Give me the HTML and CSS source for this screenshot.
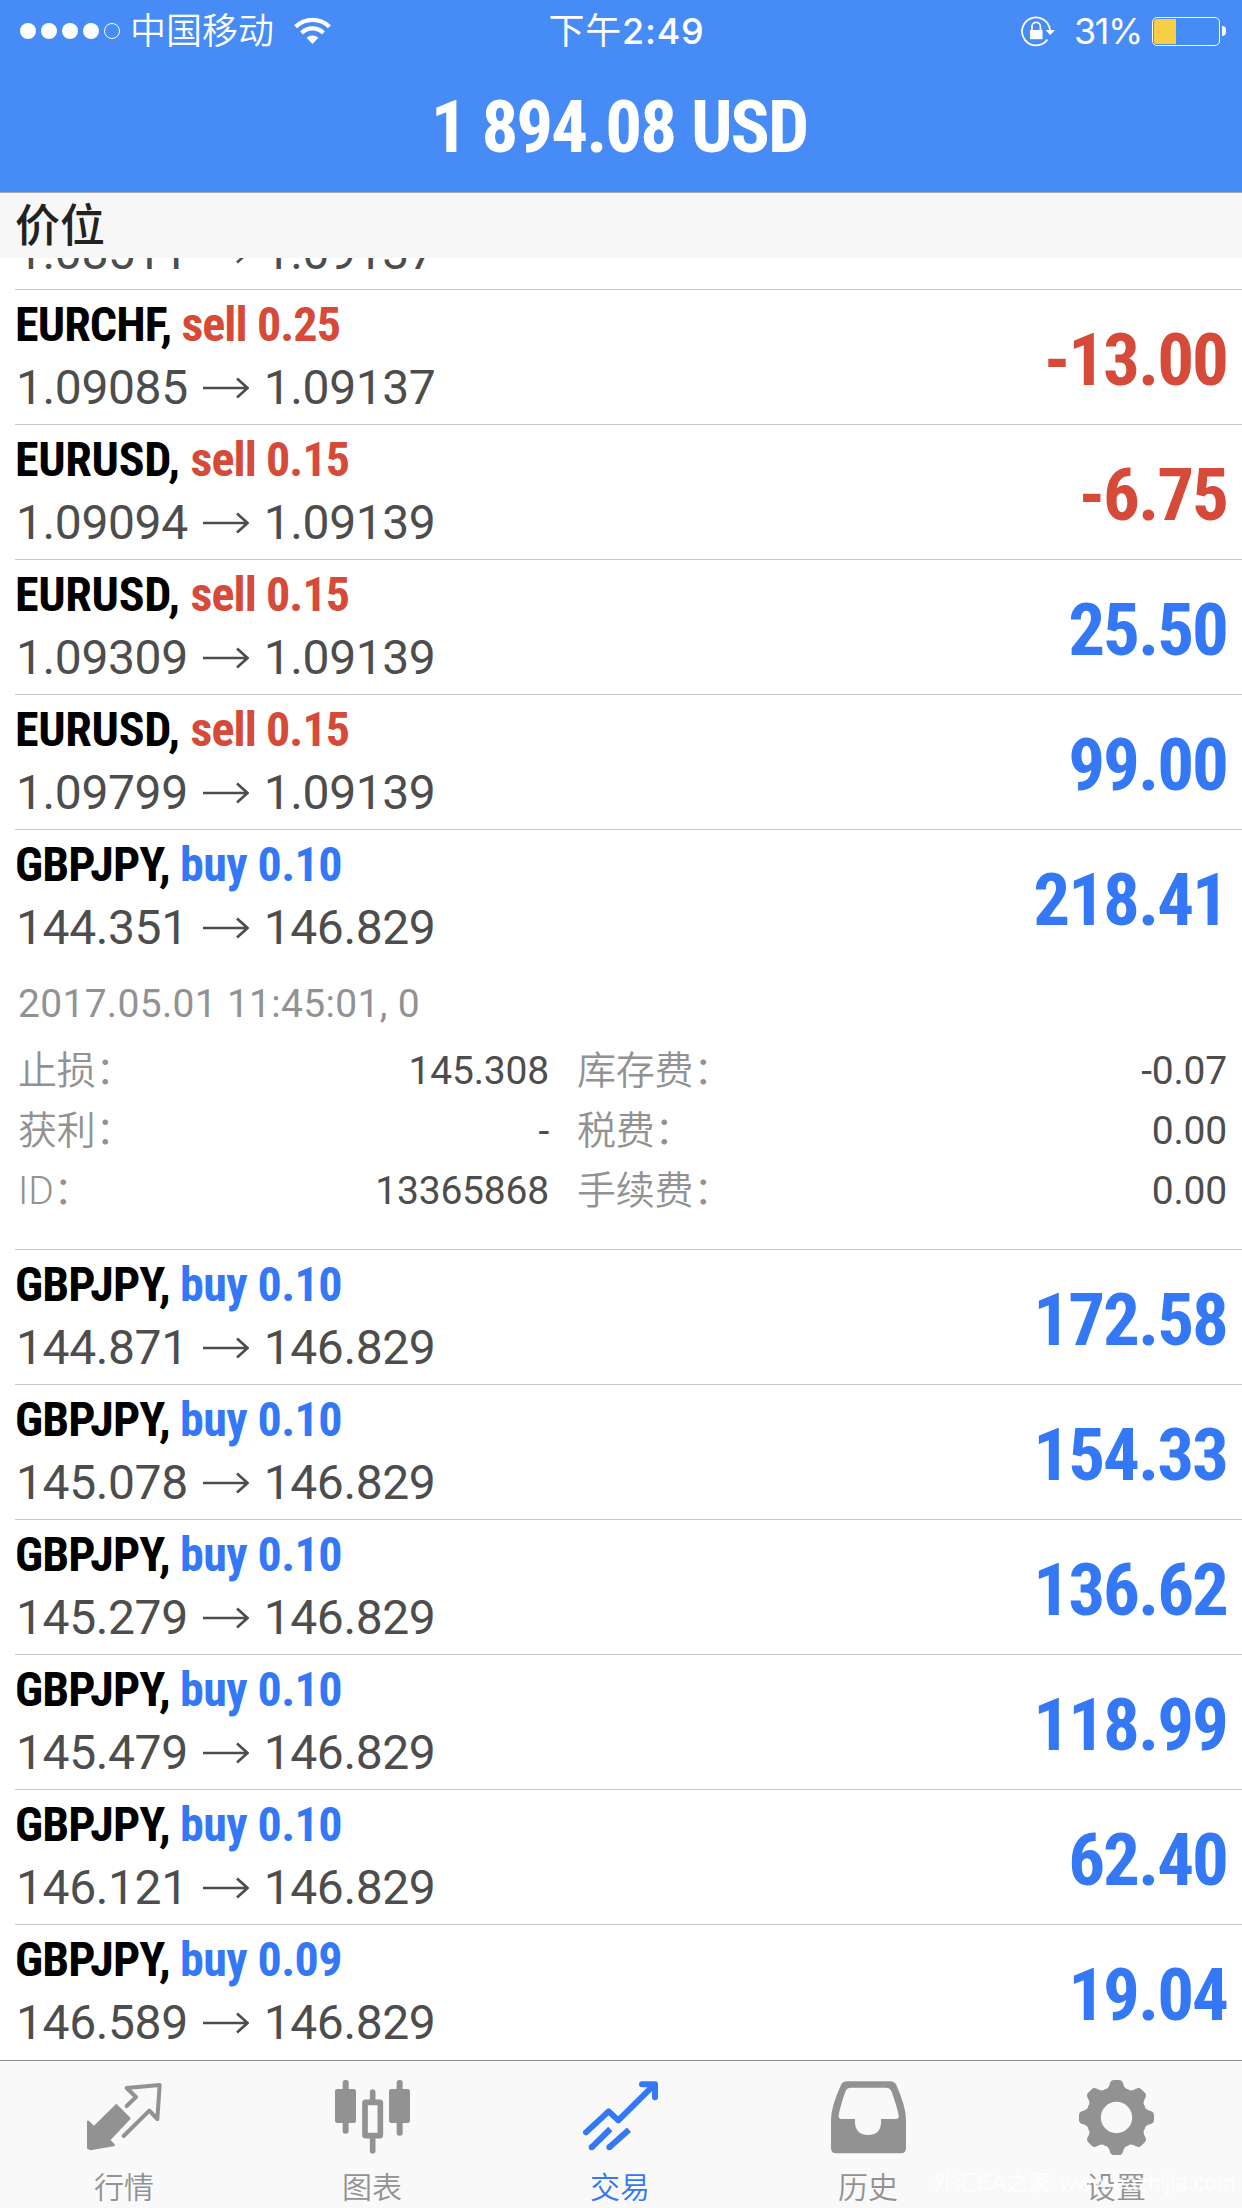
FILE: index.html
```html
<!DOCTYPE html>
<html lang="zh-CN">

<head>
    <meta charset="UTF-8">
    <meta name="viewport" content="width=device-width, initial-scale=1.0">
    <title>交易</title>
    <link rel="stylesheet" href="styles.css">
</head>

<body>
    <svg width="0" height="0" class="defs">
        <symbol id="arrow" viewBox="0 0 46 22">
            <path d="M0 11H44M34 1.5L44.5 11L34 20.5" fill="none" stroke="currentColor" stroke-width="2.6" />
        </symbol>
    </svg>

    <header class="header">
        <!-- Status bar -->
        <div class="status">
            <div class="status-left">
                <div class="signal">
                    <i></i><i></i><i></i><i></i><i class="empty"></i>
                </div>
                <span class="carrier">中国移动</span>
                <svg class="wifi" width="37" height="28" viewBox="0 0 37 28">
                    <path d="M1.6 9.8A24 24 0 0 1 35.4 9.8M7.6 15.9A15.6 15.6 0 0 1 29.4 15.9" fill="none" stroke="#fff" stroke-width="4.2" />
                    <path d="M18.5 27L12.6 20.8A8.5 8.5 0 0 1 24.4 20.8Z" fill="#fff" />
                </svg>
            </div>
            <div class="time"><span class="noon">下午</span>2:49</div>
            <div class="status-right">
                <svg width="34" height="31" viewBox="0 0 34 31">
                    <path d="M29 14A14 14 0 1 0 26.5 23.5" fill="none" stroke="#fff" stroke-width="1.8" />
                    <path d="M24.5 14H34L29.2 19Z" fill="#fff" />
                    <rect x="9" y="14" width="12.5" height="9.2" fill="#fff" />
                    <path d="M11 15V10.5a4.2 4.2 0 0 1 8.4 0V15" fill="none" stroke="#fff" stroke-width="1.8" />
                </svg>
                <span class="percent">31%</span>
                <div class="battery"><div class="level"></div></div>
                <div class="nub"></div>
            </div>
        </div>
        <h1 class="balance">1 894.08 USD</h1>
    </header>

    <h2 class="section">价位</h2>

    <!-- Positions, scrolled to the bottom -->
    <main class="list">
        <div class="row">
            <div class="info">
                <div class="symbol"></div>
                <div class="price">1.08511<svg><use href="#arrow" /></svg>1.09137</div>
            </div>
        </div>
        <div class="row">
            <div class="info">
                <div class="symbol">EURCHF, <span class="sell">sell 0.25</span></div>
                <div class="price">1.09085<svg><use href="#arrow" /></svg>1.09137</div>
            </div>
            <div class="profit loss">-13.00</div>
        </div>
        <div class="row">
            <div class="info">
                <div class="symbol usd">EURUSD, <span class="sell">sell 0.15</span></div>
                <div class="price">1.09094<svg><use href="#arrow" /></svg>1.09139</div>
            </div>
            <div class="profit loss">-6.75</div>
        </div>
        <div class="row">
            <div class="info">
                <div class="symbol usd">EURUSD, <span class="sell">sell 0.15</span></div>
                <div class="price">1.09309<svg><use href="#arrow" /></svg>1.09139</div>
            </div>
            <div class="profit">25.50</div>
        </div>
        <div class="row">
            <div class="info">
                <div class="symbol usd">EURUSD, <span class="sell">sell 0.15</span></div>
                <div class="price">1.09799<svg><use href="#arrow" /></svg>1.09139</div>
            </div>
            <div class="profit">99.00</div>
        </div>
        <div class="row">
            <div class="info">
                <div class="symbol">GBPJPY, <span class="buy">buy 0.10</span></div>
                <div class="price">144.351<svg><use href="#arrow" /></svg>146.829</div>
            </div>
            <div class="profit">218.41</div>
        </div>
        <div class="details">
            <div class="opened">2017.05.01 11:45:01, 0</div>
            <dl>
                <dt>止损：</dt>
                <dd>145.308</dd>
                <dt>库存费：</dt>
                <dd>-0.07</dd>
                <dt>获利：</dt>
                <dd>-</dd>
                <dt>税费：</dt>
                <dd>0.00</dd>
                <dt>ID：</dt>
                <dd>13365868</dd>
                <dt>手续费：</dt>
                <dd>0.00</dd>
            </dl>
        </div>
        <div class="row">
            <div class="info">
                <div class="symbol">GBPJPY, <span class="buy">buy 0.10</span></div>
                <div class="price">144.871<svg><use href="#arrow" /></svg>146.829</div>
            </div>
            <div class="profit">172.58</div>
        </div>
        <div class="row">
            <div class="info">
                <div class="symbol">GBPJPY, <span class="buy">buy 0.10</span></div>
                <div class="price">145.078<svg><use href="#arrow" /></svg>146.829</div>
            </div>
            <div class="profit">154.33</div>
        </div>
        <div class="row">
            <div class="info">
                <div class="symbol">GBPJPY, <span class="buy">buy 0.10</span></div>
                <div class="price">145.279<svg><use href="#arrow" /></svg>146.829</div>
            </div>
            <div class="profit">136.62</div>
        </div>
        <div class="row">
            <div class="info">
                <div class="symbol">GBPJPY, <span class="buy">buy 0.10</span></div>
                <div class="price">145.479<svg><use href="#arrow" /></svg>146.829</div>
            </div>
            <div class="profit">118.99</div>
        </div>
        <div class="row">
            <div class="info">
                <div class="symbol">GBPJPY, <span class="buy">buy 0.10</span></div>
                <div class="price">146.121<svg><use href="#arrow" /></svg>146.829</div>
            </div>
            <div class="profit">62.40</div>
        </div>
        <div class="row">
            <div class="info">
                <div class="symbol">GBPJPY, <span class="buy">buy 0.09</span></div>
                <div class="price">146.589<svg><use href="#arrow" /></svg>146.829</div>
            </div>
            <div class="profit">19.04</div>
        </div>
    </main>

    <!-- Tab bar -->
    <nav class="tabs">
        <a class="tab">
            <svg viewBox="0 0 225 225">
                <path d="M3 125L21 142L88 76L127 115L66 180L80 195L10 207L3 203Z" fill="currentColor" stroke="currentColor" stroke-width="7" stroke-linejoin="round" />
                <path d="M119 78L147 51L119 24L218 15L211 117L187 92L110 168" fill="none" stroke="currentColor" stroke-width="12" stroke-linecap="round" stroke-linejoin="round" />
            </svg>
            <span>行情</span>
        </a>
        <a class="tab">
            <svg viewBox="0 0 225 225" fill="currentColor">
                <rect y="27" width="63" height="102" rx="7" />
                <rect x="23" width="18" height="161" rx="8" />
                <rect x="90" y="67" width="46" height="100" rx="2" fill="none" stroke="currentColor" stroke-width="17" stroke-linejoin="round" />
                <path d="M113 36V62M113 172V212" stroke="currentColor" stroke-width="17" stroke-linecap="round" />
                <rect x="162" y="27" width="63" height="102" rx="7" />
                <rect x="185" width="18" height="167" rx="8" />
            </svg>
            <span>图表</span>
        </a>
        <a class="tab active">
            <svg viewBox="0 0 225 225" fill="none" stroke="currentColor" stroke-width="18">
                <path d="M9 157L77 94L106 121L214 14M177 13H216V52" stroke-linecap="round" stroke-linejoin="round" />
                <path d="M26 202L82 147M79 202L138 149" />
                <path d="M26 202h.1M79 202h.1" stroke-linecap="round" />
            </svg>
            <span>交易</span>
        </a>
        <a class="tab">
            <svg viewBox="0 0 225 225">
                <path fill="currentColor" fill-rule="evenodd" d="M47 4H178Q190 4 196 15Q225 80 225 120V205Q225 220 210 220H15Q0 220 0 205V120Q0 80 30 15Q35 4 47 4ZM60 23Q47 23 43 35Q27 80 23 106Q22 117 31 117H72V130Q75 165 111 165Q148 165 150 130V117H195Q205 117 203 106Q198 80 182 35Q177 23 165 23Z" />
            </svg>
            <span>历史</span>
        </a>
        <a class="tab">
            <svg viewBox="0 0 225 225">
                <g fill="currentColor">
                    <path id="tooth" d="M66 40L78 28Q89 27 93 10Q96 0 105 0H120Q129 0 132 10Q136 27 147 28L159 40Z" />
                    <use href="#tooth" transform="rotate(45 112.5 112.5)" />
                    <use href="#tooth" transform="rotate(90 112.5 112.5)" />
                    <use href="#tooth" transform="rotate(135 112.5 112.5)" />
                    <use href="#tooth" transform="rotate(180 112.5 112.5)" />
                    <use href="#tooth" transform="rotate(225 112.5 112.5)" />
                    <use href="#tooth" transform="rotate(270 112.5 112.5)" />
                    <use href="#tooth" transform="rotate(315 112.5 112.5)" />
                </g>
                <circle cx="112.5" cy="112.5" r="66" fill="none" stroke="currentColor" stroke-width="38" />
            </svg>
            <span>设置</span>
        </a>
        <div class="watermark"><span>外汇EA之家</span><span>www.eazhijia.com</span></div>
    </nav>
</body>

</html>
```
FILE: styles.css
```css
* {
    box-sizing: border-box;
}

body {
    margin: 0;
    width: 1242px;
    height: 2208px;
    display: flex;
    flex-direction: column;
    overflow: hidden;
    background-color: #fff;
    font-family: Roboto, "Noto Sans CJK SC", sans-serif;
}

.defs {
    position: absolute;
}

/* Header */
.header {
    height: 193px;
    background-color: #468bf6;
    border-bottom: 1px solid #a9a9ad;
    color: #fff;
}

.status {
    display: grid;
    grid-template-columns: 1fr auto 1fr;
    height: 60px;
    padding: 1px 16px 0 20px;
    font-family: Inter, "Noto Sans CJK SC", sans-serif;
    font-size: 36px;
    line-height: 60px;
}

.status-left,
.status-right {
    display: flex;
    align-items: center;
}

.status-right {
    justify-content: flex-end;
}

.signal {
    display: flex;
    gap: 5px;
}

.signal i {
    width: 16px;
    height: 16px;
    border-radius: 50%;
    background-color: #fff;
}

.signal .empty {
    background: none;
    border: 1px solid #fff;
}

.carrier {
    margin-left: 10px;
    font-weight: 350;
}

.wifi {
    margin-left: 20px;
}

.time {
    padding-left: 7px;
    font-weight: 500;
    letter-spacing: 0.8px;
}

.noon {
    font-weight: 400;
}

.percent {
    margin: 0 10px 0 19px;
    letter-spacing: -1.4px;
}

.battery {
    width: 68px;
    height: 29px;
    padding: 1px;
    border: 1px solid #fff;
    border-radius: 5px;
}

.level {
    width: 22px;
    height: 25px;
    border-radius: 3px 0 0 3px;
    background-color: #f8ce46;
}

.nub {
    width: 4px;
    height: 10px;
    margin-left: 2px;
    border-radius: 0 4px 4px 0;
    background-color: #fff;
}

.balance {
    margin: 0;
    padding-right: 4px;
    font-family: "Roboto Condensed", Roboto, sans-serif;
    font-stretch: 75%;
    font-size: 73px;
    line-height: 134px;
    letter-spacing: -2px;
    word-spacing: 1px;
    text-align: center;
}

.section {
    height: 65px;
    margin: 0;
    padding-left: 15px;
    background-color: #f7f7f7;
    color: #222;
    font-size: 45px;
    font-weight: 500;
    line-height: 67px;
}

/* Positions */
.list {
    height: 1802px;
    padding: 0 0 1px 15px;
    display: flex;
    flex-direction: column;
    justify-content: flex-end;
    overflow: hidden;
}

.row {
    flex: none;
    display: flex;
    justify-content: space-between;
    height: 135px;
    padding: 5px 15px 0 0;
    border-top: 1px solid #c8c8cc;
}

.symbol {
    height: 60px;
    font-family: "Roboto Condensed", Roboto, sans-serif;
    font-stretch: 75%;
    font-size: 48px;
    font-weight: 700;
    line-height: 60px;
    letter-spacing: -0.9px;
    color: #000;
}

.usd {
    letter-spacing: -0.3px;
}

.sell {
    color: #d54a38;
    letter-spacing: -0.9px;
}

.buy {
    color: #3478f6;
    letter-spacing: -0.6px;
}

.price {
    display: flex;
    align-items: center;
    padding-left: 1px;
    font-size: 48px;
    line-height: 66px;
    letter-spacing: -0.4px;
    color: #4d4d4d;
}

.price svg {
    width: 46px;
    height: 22px;
    margin: 0 15px;
}

.profit {
    font-family: "Roboto Condensed", Roboto, sans-serif;
    font-stretch: 75%;
    font-size: 73px;
    font-weight: 700;
    line-height: 130px;
    letter-spacing: -2px;
    color: #3478f6;
}

.loss {
    color: #d54a38;
}

.details {
    flex: none;
    height: 285px;
    padding: 10px 15px 0 3px;
    font-size: 39px;
    line-height: 60px;
    letter-spacing: -0.2px;
    color: #929292;
}

.opened {
    letter-spacing: 0.3px;
}

.details dl {
    display: grid;
    grid-template-columns: 150px 409px 180px 1fr;
    margin: 7px 0 0;
}

.details dt {
    font-weight: 350;
}

.details dd {
    margin: 0;
    color: #4d4d4d;
    text-align: right;
}

.details dd:nth-of-type(odd) {
    margin-right: 28px;
}

/* Tab bar */
.tabs {
    position: relative;
    display: flex;
    height: 148px;
    padding-right: 2px;
    border-top: 1px solid #8a8a8c;
    background-color: #f9f9f9;
}

.tab {
    flex: 1;
    display: flex;
    flex-direction: column;
    align-items: center;
    padding-top: 19px;
    color: #929292;
    font-size: 30px;
    font-weight: 350;
    line-height: 36px;
}

.tab svg {
    width: 75px;
    height: 75px;
    margin-bottom: 15px;
}

.active {
    color: #3478f6;
}

.watermark {
    position: absolute;
    right: 7px;
    bottom: 10px;
    display: flex;
    gap: 10px;
    font-family: "Liberation Sans", "Noto Sans CJK SC", sans-serif;
    font-size: 22px;
    line-height: 30px;
    color: rgba(255, 255, 255, 0.85);
}
```
